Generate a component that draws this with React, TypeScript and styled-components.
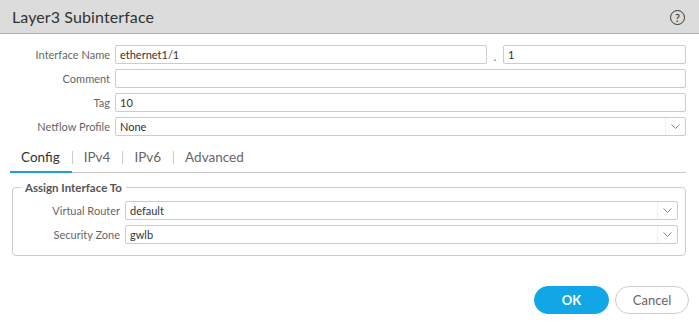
import React from "react";
import styled, { createGlobalStyle } from "styled-components";

const Global = createGlobalStyle`
  html, body { margin: 0; padding: 0; background: #fff; }
  body { font-family: Lato, "Open Sans", sans-serif; color: #333; }
  * { box-sizing: border-box; }
`;

const Dialog = styled.div`
  width: 699px;
  height: 331px;
  background: #fff;
  display: flex;
  flex-direction: column;
  overflow: hidden;
`;

const Header = styled.div`
  height: 34px;
  background: #dcdcdc;
  border-bottom: 1px solid #aeb2b6;
  display: flex;
  align-items: center;
  justify-content: space-between;
  padding: 0 14px 0 12px;
`;

const Title = styled.div`
  font-size: 16px;
  color: #333;
  letter-spacing: 0.1px;
`;

const HelpIcon = styled.div`
  width: 15px;
  height: 15px;
  border: 1.2px solid #333;
  border-radius: 50%;
  font-size: 11px;
  font-weight: 400;
  display: flex;
  align-items: center;
  justify-content: center;
  color: #222;
  line-height: 1;
  margin-top: 1px;
`;

const Form = styled.div`
  padding: 11px 13px 0 0;
  display: flex;
  flex-direction: column;
  gap: 5px;
`;

const Row = styled.div<{ $labelWidth: number }>`
  display: grid;
  grid-template-columns: ${(p) => p.$labelWidth}px 1fr;
  column-gap: 5px;
  align-items: center;
  height: 19px;
`;

const Label = styled.label`
  text-align: right;
  font-size: 11px;
  color: #666;
  white-space: nowrap;
`;

const Field = styled.div`
  height: 19px;
  border: 1px solid #ccc;
  border-radius: 2px;
  font-size: 11px;
  color: #333;
  padding-left: 4px;
  display: flex;
  align-items: center;
  background: #fff;
`;

const NameGroup = styled.div`
  display: grid;
  grid-template-columns: 372px 16px 1fr;
  align-items: center;
`;

const Dot = styled.span`
  font-size: 11px;
  color: #666;
  text-align: center;
  padding-top: 3px;
`;

const SelectBox = styled(Field)`
  justify-content: space-between;
  padding-right: 0;
`;

const Chevron = styled.span`
  width: 20px;
  height: 17px;
  display: flex;
  align-items: center;
  justify-content: center;
  border-left: 1px solid #f0f0f0;
`;

const TabBar = styled.div`
  margin: 5px 13px 0 10px;
  height: 32px;
  border-bottom: 1px solid #c8c8c8;
  display: flex;
  align-items: center;
`;

const Tab = styled.div<{ $active?: boolean }>`
  height: 100%;
  padding: 0 12px 0 11px;
  display: flex;
  align-items: center;
  font-size: 13.5px;
  color: ${(p) => (p.$active ? "#333" : "#666")};
  box-shadow: ${(p) => (p.$active ? "inset 0 -2px 0 #1a9fd9" : "none")};
  margin-bottom: -1px;
`;

const Sep = styled.span`
  width: 1px;
  height: 13px;
  background: #ccc;
  margin-top: 2px;
`;

const Group = styled.fieldset`
  margin: 8px 13px 0 12px;
  padding: 7px 7px 11px 0;
  border: 1px solid #ccc;
  border-radius: 4px;
  display: flex;
  flex-direction: column;
  gap: 5px;
  min-width: 0;
`;

const Legend = styled.legend`
  font-size: 11.5px;
  font-weight: 700;
  color: #555;
  margin-left: 8px;
  padding: 0 4px;
`;

const Footer = styled.div`
  display: flex;
  justify-content: flex-end;
  gap: 6px;
  padding: 30px 10px 0 0;
`;

const Button = styled.button<{ $primary?: boolean }>`
  width: ${(p) => (p.$primary ? 75 : 74)}px;
  height: 28px;
  border-radius: 14px;
  font-family: Lato, sans-serif;
  font-size: 13px;
  font-weight: ${(p) => (p.$primary ? 700 : 400)};
  color: ${(p) => (p.$primary ? "#fff" : "#666")};
  background: ${(p) => (p.$primary ? "#11a6e6" : "#fff")};
  border: 1px solid ${(p) => (p.$primary ? "#11a6e6" : "#ccc")};
  padding: 0;
`;

const ChevronIcon = () => (
  <Chevron>
    <svg width="9" height="5" viewBox="0 0 9 5">
      <path d="M0.5 0.5 L4.5 4.5 L8.5 0.5" fill="none" stroke="#888" strokeWidth="1" />
    </svg>
  </Chevron>
);

const Select = ({ value }: { value: string }) => (
  <SelectBox>
    <span>{value}</span>
    <ChevronIcon />
  </SelectBox>
);

export default function App() {
  return (
    <Dialog>
      <Global />
      <Header>
        <Title>Layer3 Subinterface</Title>
        <HelpIcon>?</HelpIcon>
      </Header>
      <Form>
        <Row $labelWidth={110}>
          <Label>Interface Name</Label>
          <NameGroup>
            <Field>ethernet1/1</Field>
            <Dot>.</Dot>
            <Field>1</Field>
          </NameGroup>
        </Row>
        <Row $labelWidth={110}>
          <Label>Comment</Label>
          <Field />
        </Row>
        <Row $labelWidth={110}>
          <Label>Tag</Label>
          <Field>10</Field>
        </Row>
        <Row $labelWidth={110}>
          <Label>Netflow Profile</Label>
          <Select value="None" />
        </Row>
      </Form>
      <TabBar>
        <Tab $active>Config</Tab>
        <Sep />
        <Tab>IPv4</Tab>
        <Sep />
        <Tab>IPv6</Tab>
        <Sep />
        <Tab>Advanced</Tab>
      </TabBar>
      <Group>
        <Legend>Assign Interface To</Legend>
        <Row $labelWidth={107}>
          <Label>Virtual Router</Label>
          <Select value="default" />
        </Row>
        <Row $labelWidth={107}>
          <Label>Security Zone</Label>
          <Select value="gwlb" />
        </Row>
      </Group>
      <Footer>
        <Button $primary>OK</Button>
        <Button>Cancel</Button>
      </Footer>
    </Dialog>
  );
}
